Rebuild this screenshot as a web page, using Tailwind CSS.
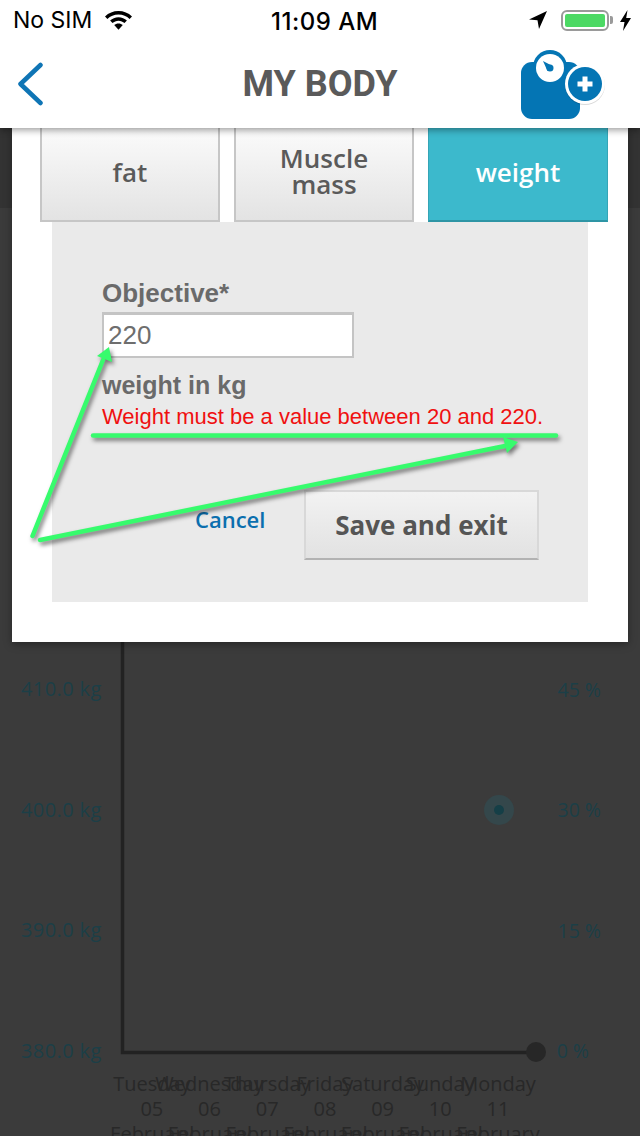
<!DOCTYPE html>
<html lang="en">
  <head>
    <meta charset="UTF-8" />
    <meta name="viewport" content="width=device-width, initial-scale=1.0" />
    <title>My Body</title>
    <script src="https://cdn.jsdelivr.net/npm/@tailwindcss/browser@4"></script>
  </head>
  <body class="w-[640px] h-[1136px] overflow-hidden bg-[#3b3b3b] font-['Open_Sans',sans-serif]">

    <!-- status bar + nav -->
    <header class="relative z-20 h-[128px] bg-white shadow-[0_2px_7px_rgba(0,0,0,0.4)]">
      <div class="h-[40px] flex items-center justify-between relative font-['Inter',sans-serif] text-[23px] text-black">
        <div class="flex items-center pl-[13px] gap-[12px]">
          <span class="font-normal">No SIM</span>
          <svg width="29" height="22" viewBox="0 0 29 22" fill="#000">
            <path d="M14.5 2C9.3 2 4.6 4 1 7.4l2.4 2.6C6.3 7.2 10.2 5.6 14.5 5.6s8.200 1.600 11.100 4.400L28 7.400C24.400 4 19.700 2 14.500 2z"/>
            <path d="M14.500 8.200c-3.300 0-6.200 1.300-8.400 3.300l2.400 2.600c1.600-1.500 3.700-2.400 6-2.400s4.400.9 6 2.400l2.400-2.600c-2.200-2-5.100-3.300-8.400-3.300z"/>
            <path d="M14.500 14.400c-1.700 0-3.200.7-4.300 1.700l4.300 4.700 4.300-4.700c-1.100-1-2.600-1.700-4.300-1.700z"/>
          </svg>
        </div>
        <span class="absolute left-[271px] top-[4px] text-[24px] font-medium tracking-[0.5px]">11:09 AM</span>
        <div class="flex items-center pr-[9px]">
          <svg class="mr-[13px]" width="20" height="20" viewBox="0 0 20 20" fill="#000"><path d="M19 1 1 9.500l8.500.8L11 19z"/></svg>
          <div class="w-[48px] h-[21px] rounded-[6px] border-[2px] border-[#9a9a9a] p-[2px]">
            <div class="w-full h-full rounded-[2px] bg-[#4cd964]"></div>
          </div>
          <div class="w-[3px] h-[8px] ml-[1px] rounded-r-[2px] bg-[#9a9a9a]"></div>
          <svg class="ml-[7px]" width="11" height="21" viewBox="0 0 11 21" fill="#000"><path d="M7.500 0 0 12h4.500L3 21l8-13H6.200z"/></svg>
        </div>
      </div>
      <nav class="h-[88px] relative flex items-start justify-center">
        <svg class="absolute left-[17px] top-[22px]" width="27" height="44" viewBox="0 0 27 44" fill="none">
          <path d="M23.500 3 3.500 22l20 19" stroke="#0f75b5" stroke-width="4.500" stroke-linecap="round" stroke-linejoin="round"/>
        </svg>
        <h1 class="mt-[24px] font-['Roboto',sans-serif] font-bold text-[36px] leading-[40px] text-[#5a5a5a]">MY BODY</h1>
        <svg class="absolute left-[515px] top-[6px]" width="95" height="76" viewBox="515 46 95 76">
          <rect x="521" y="62" width="59" height="57" rx="11" fill="#0475b4"/>
          <circle cx="550" cy="67" r="17" fill="#0475b4"/>
          <circle cx="550" cy="68" r="14" fill="#fff"/>
          <path d="M543 61 547.500 71 552.500 66z" fill="#0475b4"/>
          <circle cx="550" cy="68" r="3.500" fill="#0475b4"/>
          <circle cx="585" cy="85" r="20" fill="#000" fill-opacity=".15"/>
          <circle cx="585" cy="84" r="20" fill="#fff"/>
          <circle cx="585" cy="84" r="17" fill="#0475b4"/>
          <path d="M585 76.500v15M577.500 84h15" stroke="#fff" stroke-width="5"/>
        </svg>
      </nav>
    </header>

    <main class="relative h-[1008px] overflow-hidden">

      <!-- chart behind the dialog -->
      <div class="absolute left-0 top-0 w-full h-[80px] bg-[#333]"></div>
      <div class="relative pt-[501px]">
        <svg class="absolute left-0 top-0" width="640" height="1008" viewBox="0 128 640 1008">
          <path d="M122.500 640v412.500H536" stroke="#222" stroke-width="3.500" fill="none"/>
          <circle cx="536" cy="1052" r="10" fill="#272727"/>
          <circle cx="499" cy="810" r="15" fill="#34474b"/>
          <circle cx="499" cy="810" r="5" fill="#153f47"/>
        </svg>
        <div class="relative flex flex-col text-[20px] text-[#1c3f47]">
          <div class="h-[120.500px] flex items-center justify-between pl-[21px] pr-[39px]"><span class="tracking-[0.4px]">410.0 kg</span><span class="text-[19.500px]">45 %</span></div>
          <div class="h-[120.500px] flex items-center justify-between pl-[21px] pr-[39px]"><span class="tracking-[0.4px]">400.0 kg</span><span class="text-[19.500px]">30 %</span></div>
          <div class="h-[120.500px] flex items-center justify-between pl-[21px] pr-[39px]"><span class="tracking-[0.4px]">390.0 kg</span><span class="text-[19.500px]">15 %</span></div>
          <div class="h-[120.500px] flex items-center justify-between pl-[21px] pr-[51px]"><span class="tracking-[0.4px]">380.0 kg</span><span class="text-[19.500px]">0 %</span></div>
        </div>
        <div class="relative -mt-[40px] ml-[123px] flex text-[20px] leading-[25px] text-[#282828] whitespace-nowrap">
          <div class="w-[57.700px] flex flex-col items-center"><span>Tuesday</span><span>05</span><span>February</span></div>
          <div class="w-[57.700px] flex flex-col items-center"><span>Wednesday</span><span>06</span><span>February</span></div>
          <div class="w-[57.700px] flex flex-col items-center"><span>Thursday</span><span>07</span><span>February</span></div>
          <div class="w-[57.700px] flex flex-col items-center"><span>Friday</span><span>08</span><span>February</span></div>
          <div class="w-[57.700px] flex flex-col items-center"><span>Saturday</span><span>09</span><span>February</span></div>
          <div class="w-[57.700px] flex flex-col items-center"><span>Sunday</span><span>10</span><span>February</span></div>
          <div class="w-[57.700px] flex flex-col items-center"><span>Monday</span><span>11</span><span>February</span></div>
        </div>
      </div>

      <!-- dialog -->
      <section class="absolute left-[12px] top-0 w-[616px] h-[514px] bg-white shadow-[0_2px_8px_rgba(0,0,0,0.35)]">
        <div class="flex gap-[14px] pl-[28px] h-[94px]">
          <button class="w-[180px] pb-[4px] border-x-[2px] border-b-[2px] border-[#c6c6c6] bg-gradient-to-b from-[#fbfbfb] to-[#e3e3e3] text-[26px] leading-[26px] font-semibold text-[#5a5a5a]">fat</button>
          <button class="w-[180px] pb-[7px] border-x-[2px] border-b-[2px] border-[#c6c6c6] bg-gradient-to-b from-[#fbfbfb] to-[#e3e3e3] text-[26px] leading-[26px] font-semibold text-[#5a5a5a]">Muscle<br />mass</button>
          <button class="w-[180px] pb-[4px] border-x-[1px] border-b-[2px] border-x-[#35a5b6] border-b-[#2e95a5] bg-[#3cb9cc] text-[26px] leading-[26px] font-semibold text-white">weight</button>
        </div>
        <div class="mx-[40px] h-[380px] bg-[#eaeaea] pt-[56px] font-['Liberation_Sans',sans-serif]">
          <div class="pl-[50px]">
            <label class="block text-[26px] leading-[30px] font-bold text-[#6a6a6a]">Objective*</label>
            <div class="mt-[4px] w-[252px] h-[46px] bg-white border-[2px] border-t-[3px] border-[#c4c4c4] pl-[4px] text-[26px] leading-[40px] text-[#6e6e6e]">220</div>
            <p class="mt-[12px] text-[25px] leading-[30px] font-bold text-[#6a6a6a]">weight in kg</p>
            <p class="mt-[2px] text-[22px] leading-[30px] text-[#f01010] whitespace-nowrap">Weight must be a value between 20 and 220.</p>
          </div>
          <div class="mt-[58px] flex items-start pl-[143px] font-['Open_Sans',sans-serif]">
            <a class="w-[70px] mt-[14px] text-[22px] leading-[30px] font-semibold text-[#0b6fae]">Cancel</a>
            <button class="ml-[39px] w-[235px] h-[70px] border-[2px] border-[#d8d8d8] border-b-[#b2b2b2] bg-gradient-to-b from-[#f2f2f2] to-[#e2e2e2] text-[26px] font-bold text-[#555]">Save and exit</button>
          </div>
        </div>
      </section>

      <!-- green annotation arrows drawn on the screenshot -->
      <svg class="absolute left-0 top-0 drop-shadow-[2px_3px_2px_rgba(0,0,0,0.5)]" width="640" height="1008" viewBox="0 128 640 1008" fill="none">
        <g stroke="#37fb6d" stroke-width="4.500" stroke-linecap="round">
          <path d="M32.500 536 103 360"/>
          <path d="M40 540 505 446"/>
          <path d="M93 435.500H556"/>
        </g>
        <path d="M109 347 97 356 112 362z" fill="#37fb6d"/>
        <path d="M518 442 503 437 507 453z" fill="#37fb6d"/>
      </svg>
    </main>

  </body>
</html>
